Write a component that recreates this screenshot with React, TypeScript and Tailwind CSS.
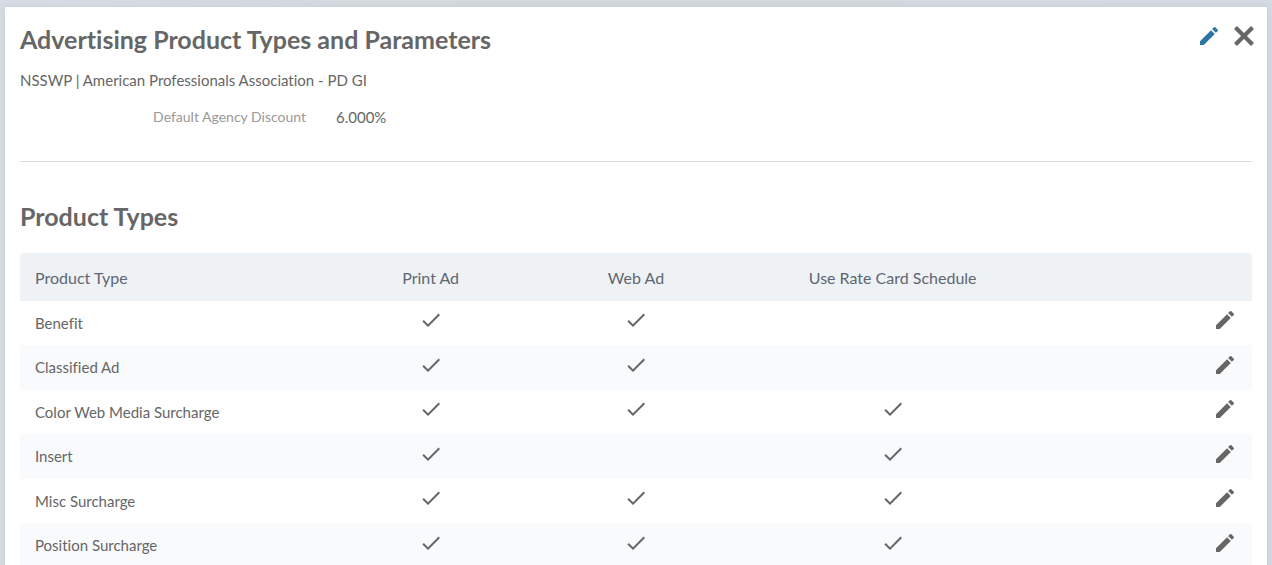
import { MdCheck, MdEdit } from 'react-icons/md';

type ProductType = {
  name: string;
  printAd: boolean;
  webAd: boolean;
  rateCard: boolean;
};

const productTypes: ProductType[] = [
  { name: 'Benefit', printAd: true, webAd: true, rateCard: false },
  { name: 'Classified Ad', printAd: true, webAd: true, rateCard: false },
  { name: 'Color Web Media Surcharge', printAd: true, webAd: true, rateCard: true },
  { name: 'Insert', printAd: true, webAd: false, rateCard: true },
  { name: 'Misc Surcharge', printAd: true, webAd: true, rateCard: true },
  { name: 'Position Surcharge', printAd: true, webAd: true, rateCard: true },
];

function CheckCell({ checked, label }: { checked: boolean; label: string }) {
  return (
    <td className="pb-1.5">
      {checked && <MdCheck className="mx-auto size-6" role="img" aria-label={label} />}
    </td>
  );
}

export default function App() {
  return (
    <div className="h-screen overflow-hidden bg-linear-to-r from-[#d8dde6] via-[#d5dade] to-[#d5dce4] px-[5px] pt-[7px] font-['Lato','Liberation_Sans',sans-serif] text-[#666] [font-variant-ligatures:none]">
      <main className="min-h-screen bg-white px-[15px] pt-4 shadow-[0_0_8px_rgba(100,115,135,0.15)]">
        {/* Header */}
        <header className="flex items-start justify-between">
          <h1 className="text-[25px] leading-8 font-bold">Advertising Product Types and Parameters</h1>
          <div className="-mr-1 flex items-center gap-[11px] pt-px">
            <button type="button" aria-label="Edit parameters" className="text-[#2a76a5]">
              <MdEdit className="size-6" />
            </button>
            <button type="button" aria-label="Close">
              <svg viewBox="0 0 24 24" className="size-6" fill="none" stroke="currentColor" strokeWidth="4.2">
                <path d="M3.5 3.5 20.5 20.5M20.5 3.5 3.5 20.5" />
              </svg>
            </button>
          </div>
        </header>
        <p className="mt-[15px] text-[15px] leading-5">NSSWP | American Professionals Association - PD GI</p>

        <dl className="mt-[17px] flex gap-[30px] border-b border-[#d8dadc] pb-[34px] text-[15px] leading-5">
          <dt className="w-[286px] text-right text-sm leading-5 text-[#999]">Default Agency Discount</dt>
          <dd>6.000%</dd>
        </dl>

        {/* Product types */}
        <h2 className="mt-[38px] text-[25px] leading-8 font-bold">Product Types</h2>
        <table className="mt-[21px] w-full table-fixed text-[15px] leading-5">
          <thead>
            <tr className="h-12 bg-[#eef2f5] text-base leading-5 text-[#5f6670]">
              <th className="w-3/12 rounded-tl-sm pt-0.5 pl-[15px] text-left font-normal">Product Type</th>
              <th className="w-2/12 pt-0.5 font-normal">Print Ad</th>
              <th className="w-2/12 pt-0.5 font-normal">Web Ad</th>
              <th className="w-3/12 pt-0.5 font-normal">Use Rate Card Schedule</th>
              <td className="w-2/12 rounded-tr-sm" />
            </tr>
          </thead>
          <tbody>
            {productTypes.map((type) => (
              <tr key={type.name} className="odd:h-11 even:h-[45px] even:bg-[#f9fafc]">
                <td className="pb-px pl-[15px]">{type.name}</td>
                <CheckCell checked={type.printAd} label="Print Ad" />
                <CheckCell checked={type.webAd} label="Web Ad" />
                <CheckCell checked={type.rateCard} label="Use Rate Card Schedule" />
                <td className="pr-[15px] pb-1.5 text-right">
                  <button type="button" aria-label={`Edit ${type.name}`} className="align-middle">
                    <MdEdit className="size-6" />
                  </button>
                </td>
              </tr>
            ))}
          </tbody>
        </table>
      </main>
    </div>
  );
}
